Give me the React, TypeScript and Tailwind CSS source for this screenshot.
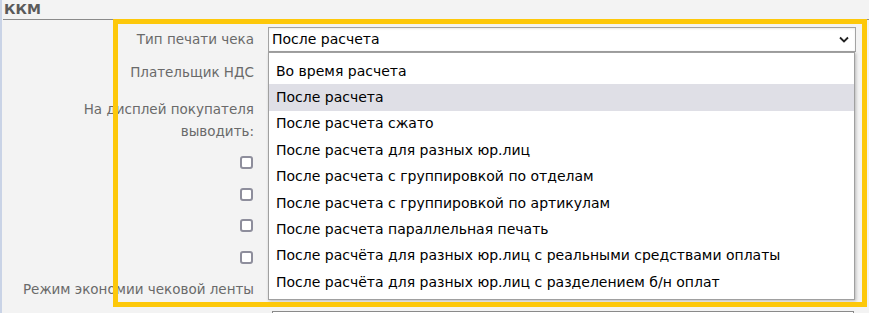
import { memo } from "react";

const options = [
  "Во время расчета",
  "После расчета",
  "После расчета сжато",
  "После расчета для разных юр.лиц",
  "После расчета с группировкой по отделам",
  "После расчета с группировкой по артикулам",
  "После расчета параллельная печать",
  "После расчёта для разных юр.лиц с реальными средствами оплаты",
  "После расчёта для разных юр.лиц с разделением б/н оплат",
];

const font = { fontFamily: '"DejaVu Sans", Verdana, sans-serif' };

const Checkbox = () => (
  <span className="inline-block w-[13px] h-[13px] rounded-[3px] border-2 border-[#8e8e9c] bg-white" />
);

const App = memo(() => {
  return (
    <div className="relative w-[869px] h-[313px] overflow-hidden bg-[#f3f3f3]" style={font}>
      {/* left accent strip */}
      <div className="absolute left-0 top-0 bottom-0 w-[2px] bg-[#c9d3e6]" />

      {/* Section header */}
      <div className="ml-[3px] h-[20px] border-b border-[#8a8a8a]">
        <div className="pl-[1px] pt-[1px] text-[14px] leading-[16px] font-bold text-[#5a5a5a]">ККМ</div>
      </div>

      {/* Form rows */}
      <div className="pt-[7px] text-[13.5px] text-[#6a6a6a]">
        <div className="flex h-[25px] items-center">
          <div className="w-[254px] text-right">Тип печати чека</div>
          <div className="ml-[14px] relative w-[588px] h-[25px] flex items-center justify-between border border-[#a3a3a3] bg-white pl-[3px] pr-[6px] text-[14px] text-black shadow-[inset_0_1px_2px_rgba(0,0,0,0.08)]">
            <span>После расчета</span>
            <svg width="10" height="7" viewBox="0 0 10 7" fill="none">
              <path d="M1 1.5 L5 5.5 L9 1.5" stroke="#222" strokeWidth="1.8" />
            </svg>
          </div>
        </div>

        <div className="flex h-[40px] items-center">
          <div className="w-[254px] text-right">Плательщик НДС</div>
        </div>

        <div className="flex h-[55px] items-center">
          <div className="w-[254px] text-right leading-[22px]">
            На дисплей покупателя
            <br />
            выводить:
          </div>
        </div>

        {[0, 1, 2, 3].map((i) => (
          <div key={i} className="flex h-[31.5px] items-center">
            <div className="w-[254px] flex justify-end pr-[1px]">
              <Checkbox />
            </div>
          </div>
        ))}

        <div className="flex h-[32px] items-center">
          <div className="w-[254px] text-right">Режим экономии чековой ленты</div>
        </div>

        <div className="flex h-[20px] items-start pt-[6px]">
          <div className="w-[254px]" />
          <div className="ml-[18px] w-[582px] h-[25px] border border-[#8a8a8a] bg-white" />
        </div>
      </div>

      {/* Opened dropdown list */}
      <div className="absolute left-[268px] top-[52px] w-[587px] h-[248px] bg-white border border-[#a0a0a0] shadow-[1px_1px_3px_rgba(0,0,0,0.25)] pt-[5px] text-[14px] text-black">
        {options.map((opt, i) => (
          <div
            key={opt}
            className={`h-[26.4px] flex items-center pl-[7px] ${i === 1 ? "bg-[#dfdfe6]" : ""}`}
          >
            {opt}
          </div>
        ))}
      </div>

      {/* Yellow highlight frame */}
      <div className="absolute left-[113px] top-[19px] w-[754px] h-[288px] border-[5px] border-[#fdc80a] pointer-events-none" />
    </div>
  );
});

App.displayName = "App";
export default App;
